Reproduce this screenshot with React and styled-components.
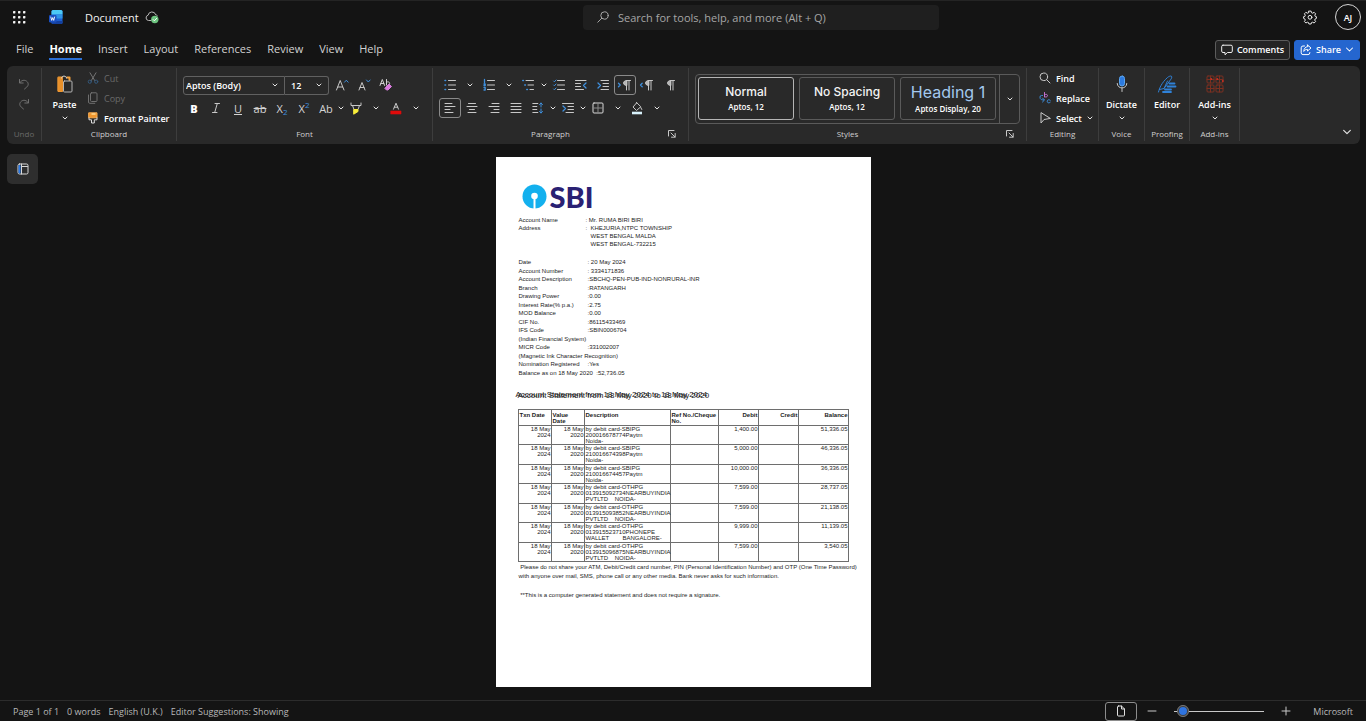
import React from "react";
import styled, { createGlobalStyle, css } from "styled-components";

const GlobalStyle = createGlobalStyle`
  * {
    box-sizing: border-box;
  }

  body {
    margin: 0;
    background: #141414;
    color: #fff;
    font-family: "Open Sans", "Noto Sans", sans-serif;
    font-size: 9px;
  }

  button, select, input {
    font: inherit;
    color: inherit;
  }
`;

/* ---------- icons ---------- */

const Svg = styled.svg`
  display: block;
  flex: none;
  fill: none;
  stroke: ${(p) => p.$color || "#c8c8c8"};
  stroke-width: 1;
  stroke-linecap: round;
  stroke-linejoin: round;
  overflow: visible;
`;

const Icon = ({ w = 14, h = w, color, children }) => (
  <Svg width={w} height={h} viewBox={`0 0 ${w} ${h}`} $color={color} aria-hidden="true">
    {children}
  </Svg>
);

const BLUE = "#3f8fdc";

const Chevron = ({ w = 6, color = "#e4e4e4" }) => (
  <Svg width={w} height={w} viewBox="0 0 6 6" $color={color} aria-hidden="true">
    <path d="M1 2 3 4 5 2" strokeWidth={w > 6 ? 0.7 : 1} />
  </Svg>
);

const WaffleIcon = () => (
  <Icon w={14}>
    {[2, 7, 12].map((y) =>
      [2, 7, 12].map((x) => (
        <rect key={`${x}-${y}`} x={x - 1} y={y - 1} width="2.4" height="2.4" rx=".6" fill="#f2f2f2" stroke="none" />
      ))
    )}
  </Icon>
);

const WordIcon = () => (
  <Icon w={14} h={16}>
    <g stroke="none">
      <rect x="2.5" y="1" width="11" height="14" rx="1.5" fill="#1b5fd0" />
      <path d="M2.500 5.500V2.500A1.500 1.500 0 0 1 4 1h8a1.500 1.500 0 0 1 1.500 1.500v3z" fill="#4cc9f5" />
      <path d="M2.500 5.500h11v4h-11z" fill="#2f93e6" />
      <path d="M2.500 12h11v1.500A1.500 1.500 0 0 1 12 15H4a1.500 1.500 0 0 1-1.500-1.500z" fill="#14409e" />
      <rect x="0" y="6" width="7.500" height="7.500" rx="1.200" fill="#1a4fc0" />
    </g>
    <path d="m1.800 8 .9 3.400L3.700 8.600l1 2.800.9-3.400" stroke="#fff" strokeWidth=".9" />
  </Icon>
);

const CloudIcon = () => (
  <Icon w={14}>
    <path d="M6 10.500H3.500a2.700 2.700 0 0 1-.4-5.300 3.900 3.900 0 0 1 7.600-.4 2.500 2.500 0 0 1 1.800 1" stroke="#b9b9b9" />
    <circle cx="9.800" cy="9.500" r="3.700" fill="#6cc47f" stroke="none" />
    <path d="m8.200 9.600 1.200 1.200 2.200-2.400" stroke="#fff" />
  </Icon>
);

const SearchIcon = ({ flip }) => (
  <Icon w={12} color={flip ? "#a8a8a8" : "#c8c8c8"}>
    {flip ? (
      <>
        <circle cx="7.500" cy="4.500" r="3.700" />
        <path d="m4.800 7.200-4 4" />
      </>
    ) : (
      <>
        <circle cx="4.800" cy="4.800" r="3.800" />
        <path d="m7.600 7.600 3.400 3.400" />
      </>
    )}
  </Icon>
);

const GearIcon = () => (
  <Icon w={14} color="#ededed">
    <path d="M5.900 1.100h2.200l.4 1.600 1.200.5 1.400-.9 1.500 1.500-.8 1.400.5 1.200 1.100.3v1.700l-1.200.5-.5 1.200.9 1.400-1.500 1.500-1.500-.8-1.100.4-.4 1.400H5.900l-.4-1.400-1.100-.4-1.500.8-1.500-1.500.9-1.400-.5-1.200-1.200-.5V6.700l1.200-.3.5-1.200-.9-1.400 1.500-1.500 1.400.9 1.200-.5z" />
    <circle cx="7" cy="7.300" r="1.900" />
  </Icon>
);

const CommentIcon = () => (
  <Icon w={12} color="#f0f0f0">
    <path d="M2 1.200h8a1.300 1.300 0 0 1 1.300 1.300v4.700A1.300 1.300 0 0 1 10 8.500H6.500L4 10.800V8.500H2A1.300 1.300 0 0 1 .7 7.200V2.500A1.300 1.300 0 0 1 2 1.200z" />
  </Icon>
);

const ShareIcon = () => (
  <Icon w={12} color="#fff">
    <path d="M4.500 2H3a1.800 1.800 0 0 0-1.800 1.800v5A1.800 1.800 0 0 0 3 10.600h5a1.800 1.800 0 0 0 1.800-1.800V8.500" />
    <path d="M7.500 1 11 4 7.500 7V5.400C5.600 5.400 4.600 6 3.800 7.400c.1-2.600 1.400-4.500 3.700-4.800z" />
  </Icon>
);

const UndoIcon = ({ redo }) => (
  <Icon w={12} color="#707070">
    <g transform={redo ? "translate(12 0) scale(-1 1)" : undefined}>
      <path d="M1.500 1.500V5h3.700M1.700 4.800C3.500 2 6.500 1.600 8.600 3.200s2.100 4.200.2 5.800L6.500 11" />
    </g>
  </Icon>
);

const PasteIcon = () => (
  <Icon w={16} h={18}>
    <path d="M5 2.500H1.500v13.500H5M10 2.500h2.500V5" stroke="#f2a03c" strokeWidth="2" />
    <path d="M1.500 2.500h4v13.500h-4z" fill="#e8902a" stroke="#e8902a" />
    <path d="M4.500 3c0-2.600 5-2.600 5 0" stroke="#d9d9d9" />
    <rect x="6.500" y="6" width="8.500" height="11" rx="1" fill="#292929" stroke="#b5b5b5" />
  </Icon>
);

const CutIcon = () => (
  <Icon w={12} color="#747474">
    <path d="m3 .8 4.700 7.700M9 .8 4.300 8.500" />
    <circle cx="2.800" cy="9.700" r="1.600" stroke="#34597d" />
    <circle cx="9.200" cy="9.700" r="1.600" stroke="#34597d" />
  </Icon>
);

const CopyIcon = () => (
  <Icon w={12} color="#6f6f6f">
    <rect x="3.500" y=".8" width="6.500" height="8.700" rx="1" />
    <path d="M1.500 3v7a1.300 1.300 0 0 0 1.300 1.300h5" />
  </Icon>
);

const PainterIcon = () => (
  <Icon w={12}>
    <path d="M2 .8h8v5H2z" fill="#f0962e" stroke="#f5a94f" />
    <path d="M2 5.800v2h2.500v3.200h2.800V7.800H10v-2" stroke="#dcdcdc" />
    <path d="M4.500 1.200h4v1.600h-4z" fill="#ffd58a" stroke="none" />
  </Icon>
);

const ClearIcon = () => (
  <Icon w={14}>
    <path d="m1 7.500 2.300-6 2.300 6M1.800 5.500h3M7.500 1.500v5.500M7.500 4.500c1-1.500 3.200-.8 3.200 1" stroke="#d0d0d0" />
    <path d="m6.500 9.500 3.500-3.500 2.500 2.500L9 12H7.500L6 10.500z" fill="#d77bdc" stroke="#d77bdc" />
  </Icon>
);

const HighlightIcon = () => (
  <Icon w={12} h={13}>
    <path d="M1 1v2.500h10V1M2.500 3.500l1.500 4h4l1.500-4" />
    <path d="M4 7.500h4V9.500l-4 2.500z" fill="#f8ee3a" stroke="#f8ee3a" />
  </Icon>
);

const FontColorIcon = () => (
  <Icon w={12} h={13}>
    <path d="m3.500 7.200 2.500-6 2.500 6M4.300 5.200h3.400" />
    <rect x="1" y="9" width="10" height="3" fill="#e00b0b" stroke="#e00b0b" strokeWidth=".6" />
  </Icon>
);

const ListIcon = ({ kind }) => (
  <Icon w={12}>
    {kind === "bullets" && <path d="M1 1.500h.6M1 6h.6M1 10.500h.6" stroke={BLUE} strokeWidth="1.600" />}
    {kind === "numbers" && <path d="M1.500.5v3M1 5h1.200v1.500H1M1 8.500h1.200V11H1" stroke={BLUE} strokeWidth="1.300" />}
    {kind === "levels" && <path d="M.8 1.500h.6M2.800 6h.6M4.800 10.500h.6" stroke={BLUE} strokeWidth="1.600" />}
    {kind === "checks" && <path d="m.6 2 .8.8L3 1M.6 6l.8.8L3 5M.6 10l.8.8L3 9" stroke={BLUE} />}
    {kind === "levels" ? (
      <path d="M4 1.500h7.500M6 6h5.500M8 10.500h3.500" />
    ) : (
      <path d="M4.500 1.500h7M4.500 6h7M4.500 10.500h7" />
    )}
  </Icon>
);

const IndentIcon = ({ out, short }) => (
  <Icon w={12}>
    {out ? (
      <>
        <path d="M.5 1.500h10.500M.5 4.500h5M.5 7.500h5M.5 10.500h8" />
        <path d="M11 4 8.500 6.500 11 9" stroke={BLUE} strokeWidth="1.300" />
      </>
    ) : (
      <>
        <path d={short ? "M.5 1.500h11M6 4.500h5.500M6 7.500h5.500M4 10.500h7.500" : "M4 1.500h7.500M6 4.500h5.500M6 7.500h5.500M4 10.500h7.500"} />
        <path d="M1 4 3.500 6.500 1 9" stroke={BLUE} strokeWidth="1.300" />
      </>
    )}
  </Icon>
);

const PilcrowIcon = ({ dir }) => (
  <Icon w={14} h={12}>
    {dir === "ltr" && <path d="m.5 4.300 1.700 1.700L.5 7.700" stroke={BLUE} strokeWidth="1.300" />}
    {dir === "rtl" && <path d="M2.200 4.300.5 6l1.700 1.700" stroke={BLUE} strokeWidth="1.300" />}
    <path d="M8.500 1.500h4M8.500 1.500v9.500M11 1.500v9.500" />
    <path d="M8.500 1.500C4.500 1.500 4.500 6.500 8.500 6.500z" fill="#b4b4b4" />
  </Icon>
);

const alignPaths = {
  left: "M1 1.500h7M1 4.500h10M1 7.500h5M1 10.500h8",
  center: "M2.500 1.500h7M1 4.500h10M3.500 7.500h5M2 10.500h8",
  right: "M4 1.500h7M1 4.500h10M6 7.500h5M3 10.500h8",
  justify: "M1 1.500h10M1 4.500h10M1 7.500h10M1 10.500h10",
};

const AlignIcon = ({ kind }) => (
  <Icon w={12}>
    <path d={alignPaths[kind]} />
  </Icon>
);

const SpacingIcon = () => (
  <Icon w={12}>
    <path d="M.8 1.500h5M.8 4.500h4M.8 7.500h4M.8 10.500h5" />
    <path d="M9 1v4M7.500 2.500 9 1l1.500 1.500M9 7v4M7.500 9.500 9 11l1.500-1.500" stroke={BLUE} />
  </Icon>
);

const BorderIcon = () => (
  <Icon w={12}>
    <rect x="1" y="1" width="10" height="10" rx="1" stroke="#dadada" />
    <path d="M6 1.500v9M1.500 6h9" stroke="#8a8a8a" />
  </Icon>
);

const FillIcon = () => (
  <Icon w={12} h={13}>
    <path d="M5.500 1 2 5l3.500 3.500L9.500 5zM5.500 1V.5M9.800 5.500l1 2" />
    <rect x="1" y="9.700" width="10" height="2.600" fill="#d8f1fb" stroke="none" />
  </Icon>
);

const LauncherIcon = () => (
  <Icon w={8}>
    <path d="M.5 6V.5H6M3 3l4 4M7.200 3.500v3.700H3.500" />
  </Icon>
);

const ReplaceIcon = () => (
  <Icon w={12}>
    <path d="M5.500.5v4.500M5.500 3c1-1.300 3-.7 3 .6s-2 2.100-3 .9" stroke="#c472cf" />
    <path d="M11.200 8.300c-1.300-1.200-3-.5-3 1s1.700 2.200 3 1" stroke={BLUE} />
    <path d="M3.500 3.500H2.500A1.500 1.500 0 0 0 1 5c0 2 .8 3 4 3M3.500 6l2 2-2 2" stroke={BLUE} />
  </Icon>
);

const SelectIcon = () => (
  <Icon w={12}>
    <path d="M2 1v10l3-3.500 6-1z" />
  </Icon>
);

const MicIcon = () => (
  <Icon w={14} h={18}>
    <rect x="4.500" y="1" width="5" height="10" rx="2.500" fill="#2d7be0" stroke="#5aa5f2" />
    <path d="M2.200 8.500c0 6 9.600 6 9.600 0M7 13v3.500" />
  </Icon>
);

const EditorIcon = () => (
  <Icon w={20} h={18} color="#2f81d8">
    <path d="M1.500 17c1-4 3-9 9-14.500 1-.9 3.300-2 4-1.200.7.800 0 2.200-1 3.500L7 13.500l-4.500 1M7 13.500 10.500 6" />
    <path d="M12.500 8.500h5M10.500 11.500h8M8 14.500h6M6 17h8" strokeWidth="1.800" />
  </Icon>
);

const AddinsIcon = () => (
  <Icon w={18} h={18} color="#7c3021">
    {[1, 10].map((y) =>
      [1, 10].map((x) => (
        <g key={`${x}-${y}`}>
          <rect x={x} y={y} width="7" height="7" rx="1" />
          <path d={`M${x + 3.5} ${y}v7M${x} ${y + 3.5}h7`} />
        </g>
      ))
    )}
    <path d="M5 4h.6M11 4h.6M16.500 6h.6" stroke="#f03020" strokeWidth="1.300" />
  </Icon>
);

const PaneIcon = () => (
  <Icon w={12} color="#d8d8d8">
    <rect x="1" y="1" width="10" height="10" rx="1.500" />
    <path d="M4.500 3.500h6" />
    <path d="M2.500 3v6.500" stroke="#2b7bea" strokeWidth="2" />
    <path d="M4.500 1v10" />
  </Icon>
);

const PageIcon = () => (
  <Icon w={10} h={12} color="#e0e0e0">
    <path d="M2.500 1h3L8.500 4v6a1 1 0 0 1-1 1h-5a1 1 0 0 1-1-1V2a1 1 0 0 1 1-1zM5.500 1v3h3" />
  </Icon>
);

/* ---------- shell ---------- */

const Shell = styled.div`
  min-height: 100vh;
  display: flex;
  flex-direction: column;
  border-top: 1px solid #242424;
`;

const PlainButton = styled.button`
  display: flex;
  align-items: center;
  justify-content: center;
  padding: 0;
  border: 0;
  background: none;
  white-space: nowrap;
  cursor: pointer;
`;

const Header = styled.header`
  display: grid;
  grid-template-columns: minmax(0, 583fr) minmax(0, 356fr) minmax(0, 427fr);
  align-items: center;
  height: 34px;
  padding-bottom: 2px;
`;

const HeaderLeft = styled.div`
  display: flex;
  align-items: center;
  padding-left: 12px;
`;

const AppMark = styled.div`
  margin: 0 22px 0 23px;
`;

const DocTitle = styled.button`
  display: flex;
  align-items: center;
  gap: 6px;
  padding: 0;
  border: 0;
  background: none;
  color: #f2f2f2;
  font-size: 11px;
`;

const SearchBox = styled.label`
  display: flex;
  align-items: center;
  gap: 9px;
  height: 25px;
  padding: 0 14px;
  border-radius: 4px;
  background: #1f1f1f;
`;

const SearchInput = styled.input`
  flex: 1;
  min-width: 0;
  padding: 0;
  border: 0;
  outline: 0;
  background: none;
  font-size: 11px;

  &::placeholder {
    color: #a6a6a6;
    opacity: 1;
  }
`;

const HeaderRight = styled.div`
  display: flex;
  align-items: center;
  justify-content: flex-end;
  gap: 18px;
  padding-right: 5px;
`;

const Avatar = styled(PlainButton)`
  width: 26px;
  height: 26px;
  border: 1px solid #d5d5d5;
  border-radius: 50%;
  font-weight: 600;
`;

const TabBar = styled.nav`
  display: flex;
  align-items: center;
  height: 31px;
  padding: 0 6px 2px 16px;
`;

const Tab = styled.a`
  margin-right: 16px;
  padding: 2px 0 1px;
  border-bottom: 2px solid ${(p) => (p.$active ? "#2b6fd4" : "transparent")};
  color: ${(p) => (p.$active ? "#fff" : "#d2d2d2")};
  font-size: 11px;
  font-weight: ${(p) => (p.$active ? 700 : 400)};
  line-height: 16px;
  text-decoration: none;
`;

const TabActions = styled.div`
  display: flex;
  gap: 4px;
  margin-left: auto;
`;

const ActionButton = styled(PlainButton)`
  gap: 4px;
  width: ${(p) => (p.$primary ? 66 : 75)}px;
  height: 20px;
  border: 1px solid ${(p) => (p.$primary ? "#2566cf" : "#5c5c5c")};
  border-radius: 3px;
  background: ${(p) => (p.$primary ? "#2566cf" : "#242424")};
  font-weight: 600;
`;

/* ---------- ribbon ---------- */

const Ribbon = styled.section`
  display: flex;
  margin: 0 6px 0 7px;
  padding: 2px 0 3px;
  border-radius: 6px;
  background: #292929;
`;

const Group = styled.div`
  flex: 0 0 ${(p) => p.$w}px;
  min-width: 0;
  display: flex;
  flex-direction: column;
  border-right: 1px solid #3d3d3d;
`;

const GroupBody = styled.div`
  display: flex;
  height: 60px;
  padding: ${(p) => p.$pad || "0"};
  ${(p) => p.$column && css`
    flex-direction: column;
    align-items: ${p.$column === "center" ? "center" : "flex-start"};
    justify-content: ${p.$column === "center" ? "space-evenly" : "flex-start"};
    gap: ${p.$gap || 0}px;
  `}
`;

const GroupFooter = styled.div`
  display: flex;
  align-items: center;
  height: 13px;
  padding: 0 ${(p) => (p.$launcher ? 12 : 0)}px 2px 0;
  color: ${(p) => (p.$muted ? "#6a6a6a" : "#d0d0d0")};
  font-size: 8px;
  line-height: 11px;
`;

const GroupName = styled.span`
  flex: 1;
  display: flex;
  justify-content: center;
  white-space: nowrap;
`;

const RibbonGroup = ({ w, name, launcher, muted, children, ...body }) => (
  <Group $w={w}>
    <GroupBody {...body}>{children}</GroupBody>
    <GroupFooter $muted={muted} $launcher={launcher}>
      <GroupName>{name}</GroupName>
      {launcher && (
        <PlainButton aria-label={`${name} settings`}>
          <LauncherIcon />
        </PlainButton>
      )}
    </GroupFooter>
  </Group>
);

const ToolRow = styled.div`
  display: flex;
  align-items: center;
  height: 20px;
`;

const Tool = styled(PlainButton)`
  width: ${(p) => p.$w || 22}px;
  height: 20px;
  border: 1px solid ${(p) => (p.$active ? "#8a8a8a" : "transparent")};
  border-radius: 3px;
  color: ${(p) => (p.$bold ? "#fff" : "#d4d4d4")};
  font-size: 11px;
  font-weight: ${(p) => (p.$bold ? 800 : 400)};
  text-decoration: ${(p) => p.$line || "none"};

  sub, sup {
    color: ${BLUE};
    font-size: 8px;
    line-height: 8px;
  }

  sub {
    margin-top: 7px;
  }

  sup {
    margin-bottom: 7px;
  }
`;

const BigTool = styled(PlainButton)`
  flex-direction: column;
  justify-content: flex-start;
  width: ${(p) => p.$w || "100%"};
  padding-top: 7px;
  font-weight: 600;
  line-height: 14px;
`;

const BigLabel = styled.span`
  margin: 5px 0 3px;
`;

const ListTool = styled(PlainButton)`
  gap: 5px;
  height: 20px;
  color: ${(p) => (p.disabled ? "#6a6a6a" : "#fff")};
  font-weight: ${(p) => (p.disabled ? 400 : 600)};
`;

const ToolList = styled.div`
  display: flex;
  flex-direction: column;
  align-items: flex-start;
`;

const Combo = styled.label`
  display: flex;
  align-items: center;
  width: ${(p) => p.$w}px;
  height: 19px;
  padding: 0 6px 0 2px;
  border: 1px solid #616161;
  border-radius: ${(p) => (p.$end ? "0 3px 3px 0" : "3px 0 0 3px")};
  border-left-width: ${(p) => (p.$end ? 0 : 1)}px;
  margin-right: ${(p) => (p.$end ? 2 : 0)}px;
`;

const ComboSelect = styled.select`
  flex: 1;
  min-width: 0;
  padding: 0 0 0 ${(p) => p.$indent || 0}px;
  border: 0;
  outline: 0;
  appearance: none;
  background: none;
  font-weight: 600;
`;

const Gallery = styled.div`
  display: flex;
  width: 100%;
  height: 50px;
  padding: 2px 0 2px 2px;
  gap: 5px;
  border: 1px solid #5a5a5a;
  border-radius: 4px;
`;

const StyleCard = styled.button`
  flex: 1;
  min-width: 0;
  height: 43px;
  display: flex;
  flex-direction: column;
  align-items: center;
  justify-content: center;
  padding: 0;
  border: 1px solid ${(p) => (p.$active ? "#b5b5b5" : "#5a5a5a")};
  border-radius: 3px;
  background: none;
  color: ${(p) => (p.$large ? "#a3c8ee" : "#f4f4f4")};
  font-family: Inter, "Liberation Sans", sans-serif;
  font-size: ${(p) => (p.$large ? 16 : 12)}px;
  font-weight: ${(p) => (p.$large ? 400 : 500)};
  line-height: ${(p) => (p.$large ? 20 : 16)}px;
  white-space: nowrap;
`;

const StyleMeta = styled.small`
  color: #fff;
  font-family: "Open Sans", sans-serif;
  font-size: 8px;
  font-weight: 600;
  line-height: 14px;
`;

const GalleryMore = styled(PlainButton)`
  width: 20px;
  margin: -2px 0 -2px -2px;
  border-left: 1px solid #5a5a5a;
`;

const Collapse = styled(PlainButton)`
  align-self: flex-end;
  margin: 0 8px 4px auto;
`;

/* ---------- document ---------- */

const Workspace = styled.main`
  flex: 1;
  display: grid;
  grid-template-columns: 1fr auto 1fr;
  align-items: start;
`;

const PaneButton = styled(PlainButton)`
  width: 31px;
  height: 30px;
  margin: 10px 0 0 7px;
  border-radius: 5px;
  background: #2e2e2e;
`;

const Sheet = styled.article`
  width: 375px;
  min-height: 530px;
  margin: 13px 0;
  padding: 27px 22px 0;
  background: #fff;
  color: #1c1c1c;
  font-family: "Liberation Sans", Arial, sans-serif;
  font-size: 6px;
`;

const Brand = styled.div`
  display: flex;
  align-items: center;
  gap: 3px;
  height: 25px;
  margin: 0 0 7px 4px;
`;

const BrandName = styled.strong`
  color: #2a2173;
  font-family: Lato, sans-serif;
  font-size: 29px;
  font-weight: 900;
  line-height: 24px;
`;

const Details = styled.dl`
  display: grid;
  grid-template-columns: ${(p) => p.$label}px 1fr;
  grid-auto-rows: 1fr;
  align-items: center;
  height: ${(p) => p.$h}px;
  margin: 0 0 ${(p) => p.$after}px;
  padding-left: 1px;
  line-height: 8px;
  white-space: pre;

  dt, dd {
    margin: 0;
  }
`;

const StatementTitle = styled.h2`
  display: grid;
  margin: 0 0 9px;
  font-size: 8px;
  font-weight: 400;
  line-height: 9px;
  white-space: nowrap;
`;

const TitleLayer = styled.span`
  grid-area: 1 / 1;
  padding: ${(p) => (p.$back ? "1px 0 0" : "0 0 1px")};
  margin-left: ${(p) => (p.$back ? 0 : -2)}px;
`;

const Table = styled.table`
  width: 331px;
  height: 153px;
  border-collapse: collapse;
  table-layout: fixed;
  line-height: 6px;

  th, td {
    padding: 0 0 0 1px;
    border: 1px solid #6e6e6e;
    vertical-align: top;
    white-space: pre;
  }

  th {
    padding-top: 2px;
    padding-bottom: 1px;
    font-weight: 700;
  }
`;

const Cell = styled.td`
  text-align: ${(p) => (p.$left ? "left" : "right")};
`;

const HeadCell = styled.th`
  text-align: ${(p) => (p.$right ? "right" : "left")};
`;

const Note = styled.p`
  margin: 1px 0 10px 1px;
  line-height: 9px;
  white-space: pre;
`;

/* ---------- status bar ---------- */

const StatusBar = styled.footer`
  display: flex;
  align-items: center;
  height: 21px;
  padding: 0 13px;
  border-top: 1px solid #2c2c2c;
  color: #b8b8b8;
`;

const StatusItems = styled.div`
  display: flex;
  gap: 8px;
`;

const StatusRight = styled.div`
  display: flex;
  align-items: center;
  margin-left: auto;
`;

const ViewButton = styled(PlainButton)`
  width: 32px;
  height: 19px;
  margin-right: 10px;
  border: 1px solid #8d8d8d;
  border-radius: 3px;
`;

const Zoom = styled.input`
  width: 90px;
  height: 14px;
  margin: 0 17px;
  appearance: none;
  background: linear-gradient(#c9c9c9, #c9c9c9) center / 100% 1px no-repeat;

  &::-webkit-slider-thumb {
    appearance: none;
    width: 12px;
    height: 12px;
    border: 2px solid #3c3c3c;
    border-radius: 50%;
    outline: 1px solid #777;
    outline-offset: -1px;
    background: #2f74e0;
  }
`;

const Vendor = styled.span`
  margin-left: 22px;
`;

/* ---------- data ---------- */

const tabs = ["File", "Home", "Insert", "Layout", "References", "Review", "View", "Help"];

const holder = [
  ["Account Name", ": Mr. RUMA BIRI BIRI"],
  ["Address", ":  KHEJURIA,NTPC TOWNSHIP"],
  ["", "   WEST BENGAL MALDA"],
  ["", "   WEST BENGAL-732215"],
];

const account = [
  ["Date", ": 20 May 2024"],
  ["Account Number", ": 3334171836"],
  ["Account Description", ":SBCHQ-PEN-PUB-IND-NONRURAL-INR"],
  ["Branch", ":RATANGARH"],
  ["Drawing Power", ":0.00"],
  ["Interest Rate(% p.a.)", ":2.75"],
  ["MOD Balance", ":0.00"],
  ["CIF No.", ":86115433469"],
  ["IFS Code", ":SBIN0006704"],
  ["(Indian Financial System)", ""],
  ["MICR Code", ":331002007"],
  ["(Magnetic Ink Character Recognition)", ""],
  ["Nomination Registered", ":Yes"],
  ["Balance as on 18 May 2020  :52,736.05", ""],
];

const transactions = [
  ["by debit card-SBIPG\n200016678774Paytm\nNoida-", "1,400.00", "51,336.05"],
  ["by debit card-SBIPG\n210016674398Paytm\nNoida-", "5,000.00", "46,336.05"],
  ["by debit card-SBIPG\n210016674457Paytm\nNoida-", "10,000.00", "36,336.05"],
  ["by debit card-OTHPG\n013915092734NEARBUYINDIA\nPVTLTD    NOIDA-", "7,599.00", "28,737.05"],
  ["by debit card-OTHPG\n013915093852NEARBUYINDIA\nPVTLTD    NOIDA-", "7,599.00", "21,138.05"],
  ["by debit card-OTHPG\n013915523710PHONEPE\nWALLET        BANGALORE-", "9,999.00", "11,139.05"],
  ["by debit card-OTHPG\n013915096875NEARBUYINDIA\nPVTLTD    NOIDA-", "7,599.00", "3,540.05"],
];

const columns = [33, 33, 86, 48, 40, 40, 50];

/* ---------- parts ---------- */

const Drop = ({ w = 17, label }) => (
  <Tool $w={w} aria-label={label}>
    <Chevron />
  </Tool>
);

const FontGroup = () => (
  <RibbonGroup w={256} name="Font" $column="start" $gap={3} $pad="7px 0 0 6px">
    <ToolRow>
      <Combo $w={102}>
        <ComboSelect aria-label="Font">
          <option>Aptos (Body)</option>
        </ComboSelect>
        <Chevron />
      </Combo>
      <Combo $w={44} $end>
        <ComboSelect aria-label="Font size" $indent={4}>
          <option>12</option>
        </ComboSelect>
        <Chevron />
      </Combo>
      <Tool aria-label="Grow font">
        <Icon w={14}>
          <path d="m1.500 12 3.700-9.500L9 12M2.800 9h4.800" />
          <path d="m9.500 4.200 1.800-2 1.800 2" stroke={BLUE} />
        </Icon>
      </Tool>
      <Tool aria-label="Shrink font">
        <Icon w={14}>
          <path d="m2 12 3-7.500L8 12M3 9.500h4" />
          <path d="m9.500 2 1.800 2 1.800-2" stroke={BLUE} />
        </Icon>
      </Tool>
      <Tool aria-label="Clear formatting"><ClearIcon /></Tool>
    </ToolRow>
    <ToolRow>
      <Tool $bold>B</Tool>
      <Tool aria-label="Italic">
        <Icon w={10} h={12}><path d="M4 1.500h4.500M1.500 10.500H6M6.300 1.500l-2.600 9" /></Icon>
      </Tool>
      <Tool $line="underline">U</Tool>
      <Tool $line="line-through">ab</Tool>
      <Tool>X<sub>2</sub></Tool>
      <Tool>X<sup>2</sup></Tool>
      <Tool>Ab</Tool>
      <Drop w={8} label="Change case" />
      <Tool aria-label="Highlight"><HighlightIcon /></Tool>
      <Drop label="Highlight colours" />
      <Tool $w={23} aria-label="Font colour"><FontColorIcon /></Tool>
      <Drop label="Font colours" />
    </ToolRow>
  </RibbonGroup>
);

const ParagraphGroup = () => (
  <RibbonGroup w={256} name="Paragraph" launcher $column="start" $gap={3} $pad="7px 0 0 6px">
    <ToolRow>
      <Tool aria-label="Bullets"><ListIcon kind="bullets" /></Tool>
      <Drop label="Bullet styles" />
      <Tool aria-label="Numbering"><ListIcon kind="numbers" /></Tool>
      <Drop label="Number styles" />
      <Tool aria-label="Multilevel list"><ListIcon kind="levels" /></Tool>
      <Drop w={9} label="List levels" />
      <Tool aria-label="Checklist"><ListIcon kind="checks" /></Tool>
      <Tool aria-label="Decrease indent"><IndentIcon out /></Tool>
      <Tool aria-label="Increase indent"><IndentIcon /></Tool>
      <Tool $active aria-label="Left to right"><PilcrowIcon dir="ltr" /></Tool>
      <Tool aria-label="Right to left"><PilcrowIcon dir="rtl" /></Tool>
      <Tool aria-label="Show marks"><PilcrowIcon /></Tool>
    </ToolRow>
    <ToolRow>
      <Tool $active aria-label="Align left"><AlignIcon kind="left" /></Tool>
      <Tool aria-label="Centre"><AlignIcon kind="center" /></Tool>
      <Tool aria-label="Align right"><AlignIcon kind="right" /></Tool>
      <Tool aria-label="Justify"><AlignIcon kind="justify" /></Tool>
      <Tool aria-label="Line spacing"><SpacingIcon /></Tool>
      <Drop w={8} label="Line spacing options" />
      <Tool aria-label="Special indent"><IndentIcon short /></Tool>
      <Drop w={8} label="Indent options" />
      <Tool aria-label="Borders"><BorderIcon /></Tool>
      <Drop label="Border options" />
      <Tool aria-label="Shading"><FillIcon /></Tool>
      <Drop label="Shading colours" />
    </ToolRow>
  </RibbonGroup>
);

const StylesGroup = () => (
  <RibbonGroup w={338} name="Styles" launcher $pad="6px 6px 0">
    <Gallery>
      <StyleCard $active>
        Normal
        <StyleMeta>Aptos, 12</StyleMeta>
      </StyleCard>
      <StyleCard>
        No Spacing
        <StyleMeta>Aptos, 12</StyleMeta>
      </StyleCard>
      <StyleCard $large>
        Heading 1
        <StyleMeta>Aptos Display, 20</StyleMeta>
      </StyleCard>
      <GalleryMore aria-label="More styles"><Chevron /></GalleryMore>
    </Gallery>
  </RibbonGroup>
);

const Statement = () => (
  <Sheet>
    <Brand>
      <Icon w={25} h={25}>
        <circle cx="12.500" cy="12.500" r="12" fill="#13b0ee" stroke="none" />
        <circle cx="12.500" cy="12" r="3.300" fill="#fff" stroke="none" />
        <path d="M11.500 13h2v12h-2z" fill="#fff" stroke="none" />
      </Icon>
      <BrandName>SBI</BrandName>
    </Brand>
    <Details $label={67} $h={32} $after={10}>
      {holder.map(([label, value]) => (
        <React.Fragment key={value}>
          <dt>{label}</dt>
          <dd>{value}</dd>
        </React.Fragment>
      ))}
    </Details>
    <Details $label={69} $h={119} $after={13}>
      {account.map(([label, value]) => (
        <React.Fragment key={label}>
          <dt>{label}</dt>
          <dd>{value}</dd>
        </React.Fragment>
      ))}
    </Details>
    <StatementTitle>
      <TitleLayer>Account Statement from 18 May 2024 to 18 May 2024</TitleLayer>
      <TitleLayer $back>Account Statement from 18 May 2020 to 18 May 2020</TitleLayer>
    </StatementTitle>
    <Table>
      <colgroup>
        {columns.map((width, i) => (
          <col key={i} width={width} />
        ))}
      </colgroup>
      <thead>
        <tr>
          <HeadCell>Txn Date</HeadCell>
          <HeadCell>{"Value\nDate"}</HeadCell>
          <HeadCell>Description</HeadCell>
          <HeadCell>{"Ref No./Cheque\nNo."}</HeadCell>
          <HeadCell $right>Debit</HeadCell>
          <HeadCell $right>Credit</HeadCell>
          <HeadCell $right>Balance</HeadCell>
        </tr>
      </thead>
      <tbody>
        {transactions.map(([description, debit, balance]) => (
          <tr key={balance}>
            <Cell>{"18 May\n2024"}</Cell>
            <Cell>{"18 May\n2020"}</Cell>
            <Cell $left>{description}</Cell>
            <Cell />
            <Cell>{debit}</Cell>
            <Cell />
            <Cell>{balance}</Cell>
          </tr>
        ))}
      </tbody>
    </Table>
    <Note>
      {" Please do not share your ATM, Debit/Credit card number, PIN (Personal Identification Number) and OTP (One Time Password)\nwith anyone over mail, SMS, phone call or any other media. Bank never asks for such information."}
    </Note>
    <Note>{" **This is a computer generated statement and does not require a signature."}</Note>
  </Sheet>
);

export default function App() {
  return (
    <Shell>
      <GlobalStyle />
      <Header>
        <HeaderLeft>
          <PlainButton aria-label="App launcher"><WaffleIcon /></PlainButton>
          <AppMark><WordIcon /></AppMark>
          <DocTitle>
            Document
            <CloudIcon />
          </DocTitle>
        </HeaderLeft>
        <SearchBox>
          <SearchIcon flip />
          <SearchInput type="search" aria-label="Search" placeholder="Search for tools, help, and more (Alt + Q)" />
        </SearchBox>
        <HeaderRight>
          <PlainButton aria-label="Settings"><GearIcon /></PlainButton>
          <Avatar>AJ</Avatar>
        </HeaderRight>
      </Header>

      <TabBar>
        {tabs.map((tab) => (
          <Tab key={tab} href={`#${tab.toLowerCase()}`} $active={tab === "Home"}>
            {tab}
          </Tab>
        ))}
        <TabActions>
          <ActionButton><CommentIcon />Comments</ActionButton>
          <ActionButton $primary><ShareIcon />Share<Chevron w={9} color="#fff" /></ActionButton>
        </TabActions>
      </TabBar>

      <Ribbon>
        <RibbonGroup w={35} name="Undo" muted $column="center" $pad="2px 0 10px">
          <PlainButton disabled aria-label="Undo"><UndoIcon /></PlainButton>
          <PlainButton disabled aria-label="Redo"><UndoIcon redo /></PlainButton>
        </RibbonGroup>
        <RibbonGroup w={135} name="Clipboard">
          <BigTool $w="45px">
            <PasteIcon />
            <BigLabel>Paste</BigLabel>
            <Chevron />
          </BigTool>
          <ToolList>
            <ListTool disabled><CutIcon />Cut</ListTool>
            <ListTool disabled><CopyIcon />Copy</ListTool>
            <ListTool><PainterIcon />Format Painter</ListTool>
          </ToolList>
        </RibbonGroup>
        <FontGroup />
        <ParagraphGroup />
        <StylesGroup />
        <RibbonGroup w={72} name="Editing" $pad="0 0 0 12px">
          <ToolList>
            <ListTool><SearchIcon />Find</ListTool>
            <ListTool><ReplaceIcon />Replace</ListTool>
            <ListTool><SelectIcon />Select<Chevron /></ListTool>
          </ToolList>
        </RibbonGroup>
        <RibbonGroup w={46} name="Voice">
          <BigTool><MicIcon /><BigLabel>Dictate</BigLabel><Chevron /></BigTool>
        </RibbonGroup>
        <RibbonGroup w={45} name="Proofing">
          <BigTool><EditorIcon /><BigLabel>Editor</BigLabel></BigTool>
        </RibbonGroup>
        <RibbonGroup w={50} name="Add-ins">
          <BigTool><AddinsIcon /><BigLabel>Add-ins</BigLabel><Chevron /></BigTool>
        </RibbonGroup>
        <Collapse aria-label="Collapse ribbon"><Chevron w={10} /></Collapse>
      </Ribbon>

      <Workspace>
        <PaneButton aria-label="Navigation pane"><PaneIcon /></PaneButton>
        <Statement />
      </Workspace>

      <StatusBar>
        <StatusItems>
          <span>Page 1 of 1</span>
          <span>0 words</span>
          <span>English (U.K.)</span>
          <span>Editor Suggestions: Showing</span>
        </StatusItems>
        <StatusRight>
          <ViewButton aria-label="Page view"><PageIcon /></ViewButton>
          <PlainButton aria-label="Zoom out"><Icon w={10}><path d="M1 5h8" /></Icon></PlainButton>
          <Zoom type="range" aria-label="Zoom" min="0" max="100" defaultValue="4" />
          <PlainButton aria-label="Zoom in"><Icon w={10}><path d="M1 5h8M5 1v8" /></Icon></PlainButton>
          <Vendor>Microsoft</Vendor>
        </StatusRight>
      </StatusBar>
    </Shell>
  );
}
